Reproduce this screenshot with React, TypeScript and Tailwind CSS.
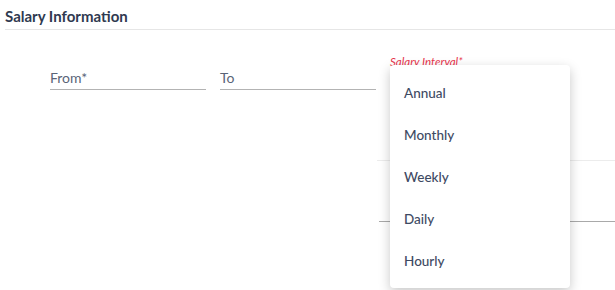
import React from "react";

export default function App() {
  const items = ["Annual", "Monthly", "Weekly", "Daily", "Hourly"];
  return (
    <div className="relative w-[615px] h-[290px] overflow-hidden bg-white font-['Lato',sans-serif]">
      <div className="pl-[5px] pt-[6px]">
        <h2 className="text-[15px] leading-[20px] font-bold text-[#2f3a50]">Salary Information</h2>
        <div className="mt-[3px] h-px bg-[#e6e6e6]" />
      </div>
      <div className="flex pl-[50px] pt-[40px] gap-[14px]">
        <div className="w-[156px] border-b-[1.5px] border-[#b3b3b3] pb-[3px]">
          <span className="block text-[14px] leading-[16px] text-[#5a6477]">From*</span>
        </div>
        <div className="w-[156px] border-b-[1.5px] border-[#b3b3b3] pb-[3px]">
          <span className="block text-[14px] leading-[16px] text-[#5a6477]">To</span>
        </div>
      </div>
      <div className="ml-[377px] mt-[70px] h-px bg-[#ececec]" />
      <div className="ml-[379px] mt-[60px] h-px bg-[#a9a9a9]" />

      <span className="absolute left-[390px] top-[53px] text-[11.5px] italic text-[#e8344c]">Salary Interval*</span>
      <div className="absolute left-[390px] top-[65px] w-[180px] h-[223px] rounded-[4px] bg-white shadow-[0_4px_12px_rgba(0,0,0,0.22)] pt-[7px]">
        {items.map((it) => (
          <div key={it} className="h-[42px] flex items-center pl-[14px] text-[13.5px] font-medium text-[#3e4a63]">
            {it}
          </div>
        ))}
      </div>
    </div>
  );
}
